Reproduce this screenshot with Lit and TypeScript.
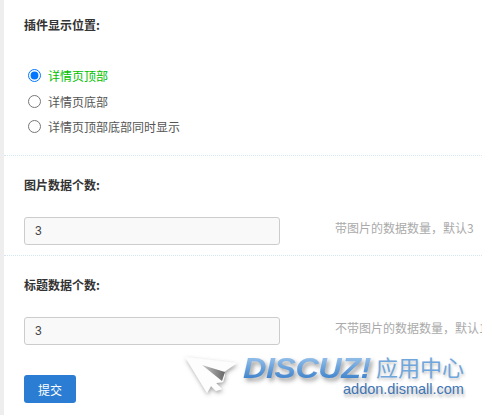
import { LitElement, html, css } from "lit";
import { customElement } from "lit/decorators.js";

@customElement("app-root")
export class AppRoot extends LitElement {
  static styles = css`
    :host {
      display: block;
      width: 482px;
      height: 415px;
      overflow: hidden;
      position: relative;
      background: #fff;
      font-family: "Noto Sans CJK SC", "Liberation Sans", sans-serif;
      font-size: 12px;
      color: #555;
      box-sizing: border-box;
      border-left: 4px solid #eeeeee;
    }
    .section { border-bottom: 1px dotted #d5e6f3; padding-left: 20px; }
    .s1 { padding-top: 16px; height: 139px; box-sizing: content-box; }
    .s2 { height: 100px; box-sizing: border-box; padding-top: 20px; }
    .s3 { padding-left: 20px; padding-top: 20px; }
    .label { font-weight: 700; color: #333; font-size: 12px; line-height: 17px; height: 17px; }
    .radios { margin-top: 30px; margin-left: 4px; display: flex; flex-direction: column; }
    .radio { display: flex; align-items: center; height: 25.5px; gap: 7px; line-height: 17px; color: #555; }
    .radio input { margin: 0; width: 13px; height: 13px; accent-color: #0075ff; flex: none; }
    .radio.on { color: #00c000; }
    .field { display: flex; align-items: flex-start; margin-top: 24px; }
    .field input {
      box-sizing: border-box;
      width: 256px;
      height: 28px;
      border: 1px solid #ccc;
      border-radius: 3px;
      background: #f9f9f9;
      padding: 0 10px;
      font: 12px "Liberation Sans", sans-serif;
      color: #444;
      outline: none;
      flex: none;
    }
    .help { margin-left: 55px; margin-top: 3px; line-height: 16px; color: #aaa; white-space: nowrap; font-size: 12px; }
    button {
      display: block;
      margin-top: 30px;
      width: 52px;
      height: 28px;
      border: 0;
      border-radius: 3px;
      background: #2b7cd3;
      color: #fff;
      font: 12px "Noto Sans CJK SC", sans-serif;
      padding: 0;
    }
    .mark {
      position: absolute;
      left: 177px;
      top: 353px;
      width: 290px;
      height: 50px;
      pointer-events: none;
    }
    .mark svg { position: absolute; left: 0; top: 0; overflow: visible; }
    .brand {
      position: absolute;
      left: 62px;
      top: -3px;
      font: italic 700 29.5px/36px "Liberation Sans", sans-serif;
      letter-spacing: -0.5px;
      padding-right: 6px;
      transform: scaleX(1.1);
      transform-origin: left center;
      background: linear-gradient(#8dbbe8 25%, #3f83cc 80%);
      -webkit-background-clip: text;
      background-clip: text;
      color: transparent;
      filter: drop-shadow(2px 3px 2px rgba(60, 60, 60, 0.5));
      white-space: nowrap;
    }
    .cn {
      position: absolute;
      left: 195px;
      top: -1px;
      font: 22px/28px "Noto Sans CJK SC", sans-serif;
      color: #6fa6dc;
      white-space: nowrap;
      text-shadow: 1px 2px 3px rgba(60, 60, 60, 0.3);
    }
    .url {
      position: absolute;
      left: 162px;
      top: 27px;
      font: 14.5px/18px "Liberation Sans", sans-serif;
      color: #3f75b3;
      white-space: nowrap;
      text-shadow: 1px 3px 3px rgba(60, 60, 60, 0.4);
    }
  `;

  render() {
    return html`
      <div class="section s1">
        <div class="label">插件显示位置:</div>
        <div class="radios">
          <label class="radio on"><input type="radio" name="p" checked />详情页顶部</label>
          <label class="radio"><input type="radio" name="p" />详情页底部</label>
          <label class="radio"><input type="radio" name="p" />详情页顶部底部同时显示</label>
        </div>
      </div>
      <div class="section s2">
        <div class="label">图片数据个数:</div>
        <div class="field">
          <input value="3" />
          <span class="help">带图片的数据数量，默认3</span>
        </div>
      </div>
      <div class="s3">
        <div class="label">标题数据个数:</div>
        <div class="field">
          <input value="3" />
          <span class="help">不带图片的数据数量，默认10</span>
        </div>
        <button>提交</button>
      </div>
      <div class="mark">
        <svg width="60" height="46" viewBox="0 0 60 46">
          <defs>
            <filter id="sh" x="-30%" y="-30%" width="160%" height="160%">
              <feDropShadow dx="1" dy="2" stdDeviation="2" flood-color="#555" flood-opacity="0.55" />
            </filter>
            <linearGradient id="fold" x1="0" y1="0" x2="1" y2="0">
              <stop offset="0" stop-color="#c8c8c8" />
              <stop offset="1" stop-color="#666" />
            </linearGradient>
          </defs>
          <path d="M4 4 L56 10 L43 19 L44 22 L42 29 L35 30 L41 36 L35 38 L30 33 L26 40 Z" fill="#fdfdfd" filter="url(#sh)" />
          <path d="M21 12 L44 19 L41 28 Z" fill="url(#fold)" />
        </svg>
        <span class="brand">DISCUZ!</span>
        <span class="cn">应用中心</span>
        <span class="url">addon.dismall.com</span>
      </div>
    `;
  }
}
